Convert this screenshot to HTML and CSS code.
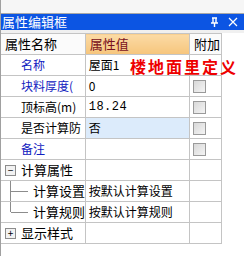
FILE: index.html
```html
<!DOCTYPE html>
<html>
<head>
    <meta charset="UTF-8">
    <title>属性编辑框</title>
    <link rel="stylesheet" href="styles.css">
</head>
<body>
    <div class="panel">
        <div class="toolbar"></div>
        <div class="title-bar">
            <span class="title">属性编辑框</span>
            <span class="title-icons">
                <svg width="9" height="10" viewBox="0 0 9 10"><path d="M2 1h5M3 1v5M6 1v5M1 6h7M4.5 6v4" stroke="#fff" stroke-width="1.4" fill="none"/></svg>
                <svg width="10" height="10" viewBox="0 0 10 10"><path d="M1 1l8 8M9 1l-8 8" stroke="#fff" stroke-width="1.2"/></svg>
            </span>
        </div>
        <div class="gap"></div>

        <table class="props">
            <colgroup>
                <col class="c-name">
                <col class="c-value">
                <col class="c-extra">
            </colgroup>
            <tr class="head">
                <td>属性名称</td>
                <td class="head-value">属性值</td>
                <td>附加</td>
            </tr>
            <tr>
                <td class="name blue">名称</td>
                <td>屋面1</td>
                <td></td>
            </tr>
            <tr>
                <td class="name blue">块料厚度(</td>
                <td>0</td>
                <td><span class="check"></span></td>
            </tr>
            <tr>
                <td class="name">顶标高(m)</td>
                <td class="num">18.24</td>
                <td><span class="check"></span></td>
            </tr>
            <tr>
                <td class="name">是否计算防</td>
                <td class="selected">否</td>
                <td><span class="check"></span></td>
            </tr>
            <tr>
                <td class="name blue">备注</td>
                <td></td>
                <td><span class="check"></span></td>
            </tr>
            <tr>
                <td class="group"><span class="toggle">−</span>计算属性</td>
                <td></td>
                <td></td>
            </tr>
            <tr>
                <td class="child"><span class="branch"></span>计算设置</td>
                <td>按默认计算设置</td>
                <td></td>
            </tr>
            <tr>
                <td class="child last"><span class="branch"></span>计算规则</td>
                <td>按默认计算规则</td>
                <td></td>
            </tr>
            <tr>
                <td class="group"><span class="toggle">+</span>显示样式</td>
                <td></td>
                <td></td>
            </tr>
        </table>

        <div class="note">楼地面里定义</div>
    </div>
</body>
</html>
```

FILE: styles.css
```css
body {
    margin: 0;
    background-color: #fff;
    font-family: "Noto Sans CJK SC", "DejaVu Sans", sans-serif;
    font-size: 12px;
    color: #000;
}

.panel {
    position: relative;
    width: 244px;
    height: 256px;
    border-left: 1px solid #a0a0a0;
    box-sizing: border-box;
}

.toolbar {
    height: 13px;
    background-color: #f6f6f6;
    border-bottom: 1px solid #a8a8a8;
}

.title-bar {
    height: 16px;
    background-color: #0c55e3;
    display: flex;
    align-items: center;
    justify-content: space-between;
    padding: 0 6px 0 1px;
}

.title {
    color: #fff;
    font-size: 13px;
    line-height: 16px;
}

.title-icons {
    display: flex;
    gap: 9px;
    align-items: center;
}

.gap {
    height: 3px;
    background-color: #f0f0f0;
}

.props {
    border-collapse: collapse;
    table-layout: fixed;
    width: 221px;
}

.c-name { width: 84px; }
.c-value { width: 104px; }
.c-extra { width: 32px; }

.props td {
    height: 20px;
    padding: 0 0 0 3px;
    border: 1px solid #c4c4c4;
    border-left-color: #c4c4c4;
    white-space: nowrap;
    overflow: hidden;
    line-height: 20px;
}

.props tr td:first-child {
    border-left: none;
}

.head td {
    background-color: #fbfbfb;
    font-size: 13px;
    padding-left: 4px;
}

.props .head-value {
    background: linear-gradient(#fbdba6, #f6c57c);
    color: #7a1020;
}

.name {
    padding-left: 20px !important;
}

.blue {
    color: #1020c0;
}

.num {
    font-family: "Liberation Mono", monospace;
    letter-spacing: 0.5px;
}

.props .selected {
    background-color: #dcebfb;
}

.check {
    display: inline-block;
    width: 11px;
    height: 11px;
    margin-top: 4px;
    vertical-align: top;
    border: 1px solid #9a9a9a;
    background: linear-gradient(135deg, #d8d8d8, #f4f4f4);
}

.group {
    position: relative;
    padding-left: 20px !important;
    font-size: 13px;
}

.toggle {
    position: absolute;
    left: 4px;
    top: 5px;
    width: 9px;
    height: 9px;
    border: 1px solid #8c8c8c;
    background-color: #f2f2f2;
    font-size: 10px;
    line-height: 8px;
    text-align: center;
    color: #000;
}

.child {
    position: relative;
    padding-left: 32px !important;
    font-size: 13px;
}

.branch {
    position: absolute;
    left: 9px;
    top: -1px;
    width: 17px;
    height: 11px;
    border-left: 1px solid #8c8c8c;
    border-bottom: 1px solid #8c8c8c;
}

.child .branch {
    height: 22px;
    border-bottom: none;
}

.child .branch::after {
    content: "";
    position: absolute;
    left: 0;
    top: 11px;
    width: 17px;
    border-top: 1px solid #8c8c8c;
}

.child.last .branch {
    height: 11px;
}

.note {
    position: absolute;
    left: 129px;
    top: 54px;
    color: #ee0000;
    font-size: 16px;
    font-weight: bold;
    letter-spacing: 2px;
}
```
